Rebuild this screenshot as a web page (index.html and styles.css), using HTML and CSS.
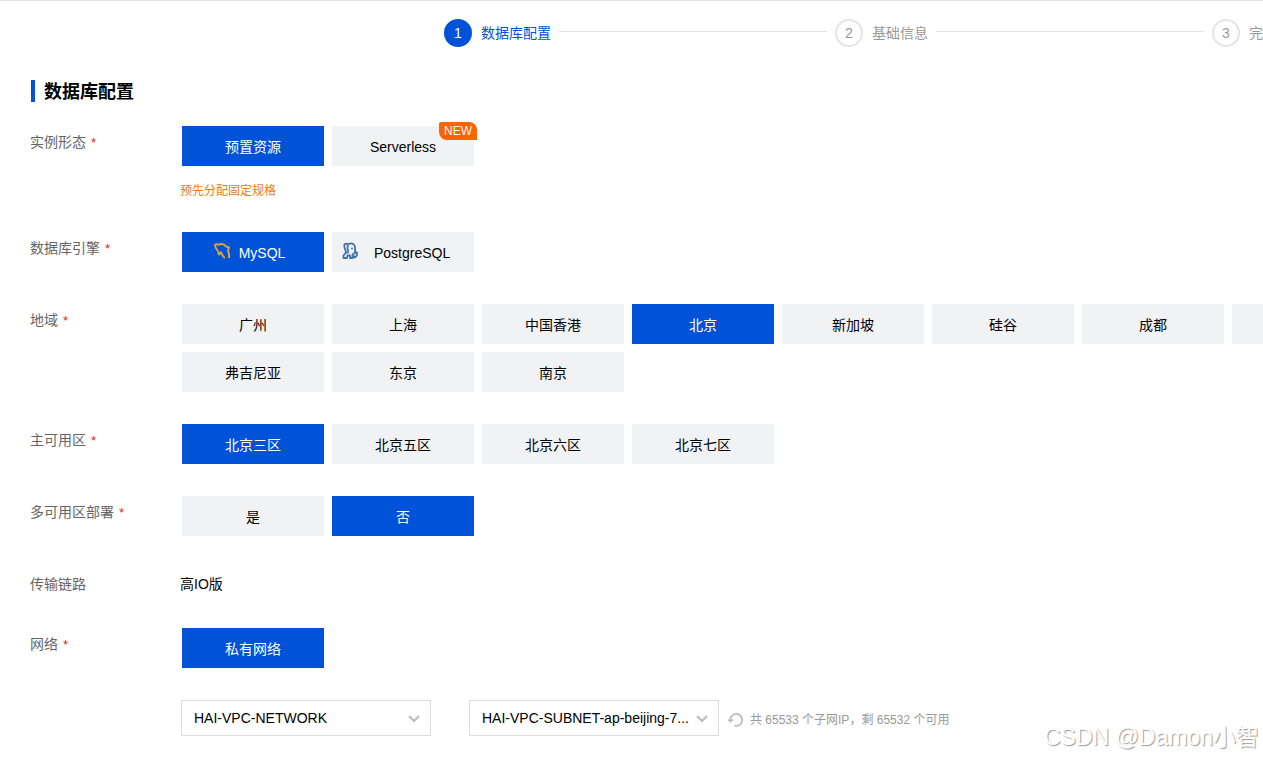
FILE: index.html
```html
<!DOCTYPE html>
<html lang="zh-CN">
<head>
<meta charset="utf-8">
<meta name="viewport" content="width=device-width, initial-scale=1">
<title>数据库配置</title>
<link rel="stylesheet" href="styles.css">
</head>
<body>
<div class="page">
  <ol class="steps">
    <li class="step step-active"><span class="step-num">1</span><span class="step-name">数据库配置</span></li>
    <li class="step-line" role="presentation"></li>
    <li class="step"><span class="step-num">2</span><span class="step-name">基础信息</span></li>
    <li class="step-line" role="presentation"></li>
    <li class="step"><span class="step-num">3</span><span class="step-name">完</span></li>
  </ol>

  <main class="config">
    <h1 class="title">数据库配置</h1>

    <section class="row" role="group" aria-labelledby="l-form">
      <div class="label" id="l-form">实例形态<span class="req">*</span></div>
      <div class="field">
        <div class="options">
          <button type="button" class="option selected" aria-pressed="true">预置资源</button>
          <button type="button" class="option" aria-pressed="false">Serverless<span class="badge">NEW</span></button>
        </div>
        <p class="tip">预先分配固定规格</p>
      </div>
    </section>

    <section class="row" role="group" aria-labelledby="l-engine">
      <div class="label" id="l-engine">数据库引擎<span class="req">*</span></div>
      <div class="options">
        <button type="button" class="option engine selected" aria-pressed="true">
          <svg class="icon" viewBox="0 0 18 18" aria-hidden="true"><path d="M5 9C3.500 7.500 2 5.500 2 3C3 1.700 4.500 2.600 6 2.500C9 1.500 11.500 2.300 13 4.500L16 5.500L15 8.500C16 11 16.300 13 16 16M5 9L6 12.500L8 10.200C9 12.500 9.500 14.500 12 16" fill="none" stroke="#dba53c" stroke-width="2" stroke-linejoin="round"/></svg>
          <span>MySQL</span>
        </button>
        <button type="button" class="option engine engine-wide" aria-pressed="false">
          <svg class="icon" viewBox="0 0 18 18" aria-hidden="true"><path d="M5 10.500C4.500 7.500 2.500 4.300 3.500 2.300C5.500 1.200 7.300 2 8.500 1.800C11 .8 13.700 2.200 14 5C14.300 7.300 14.200 9 13.800 11M7 3C6.300 5.500 6.500 8 7.500 9.500M5 10.500L2.500 13.500V16H6L6.500 13.500H9V16H11.500V12.500L13.800 11L16 10.300C16.400 13 15.200 15.500 13.300 15.600V13.500M5 10.500C6.200 11 7.200 10.500 7.500 9.500" fill="none" stroke="#4071a8" stroke-width="1.800" stroke-linejoin="round"/><circle cx="11" cy="6.500" r="1" fill="#4071a8"/></svg>
          <span>PostgreSQL</span>
        </button>
      </div>
    </section>

    <section class="row" role="group" aria-labelledby="l-region">
      <div class="label" id="l-region">地域<span class="req">*</span></div>
      <div class="options regions">
        <button type="button" class="option">广州</button>
        <button type="button" class="option">上海</button>
        <button type="button" class="option">中国香港</button>
        <button type="button" class="option selected" aria-pressed="true">北京</button>
        <button type="button" class="option">新加坡</button>
        <button type="button" class="option">硅谷</button>
        <button type="button" class="option">成都</button>
        <button type="button" class="option" aria-label="更多地域"></button>
        <button type="button" class="option">弗吉尼亚</button>
        <button type="button" class="option">东京</button>
        <button type="button" class="option">南京</button>
      </div>
    </section>

    <section class="row" role="group" aria-labelledby="l-zone">
      <div class="label" id="l-zone">主可用区<span class="req">*</span></div>
      <div class="options">
        <button type="button" class="option selected" aria-pressed="true">北京三区</button>
        <button type="button" class="option">北京五区</button>
        <button type="button" class="option">北京六区</button>
        <button type="button" class="option">北京七区</button>
      </div>
    </section>

    <section class="row" role="group" aria-labelledby="l-multi">
      <div class="label" id="l-multi">多可用区部署<span class="req">*</span></div>
      <div class="options">
        <button type="button" class="option">是</button>
        <button type="button" class="option selected" aria-pressed="true">否</button>
      </div>
    </section>

    <section class="row row-text">
      <div class="label">传输链路</div>
      <div class="value">高IO版</div>
    </section>

    <section class="row" role="group" aria-labelledby="l-net">
      <div class="label" id="l-net">网络<span class="req">*</span></div>
      <div class="field">
        <div class="options">
          <button type="button" class="option selected" aria-pressed="true">私有网络</button>
        </div>
        <div class="network">
          <div class="select-box">
            <select class="select" aria-label="私有网络"><option>HAI-VPC-NETWORK</option></select>
            <svg class="chevron" viewBox="0 0 12 8" aria-hidden="true"><path d="M1 1L6 6L11 1" fill="none" stroke="#bbb" stroke-width="2"/></svg>
          </div>
          <div class="select-box">
            <select class="select" aria-label="子网"><option>HAI-VPC-SUBNET-ap-beijing-7...</option></select>
            <svg class="chevron" viewBox="0 0 12 8" aria-hidden="true"><path d="M1 1L6 6L11 1" fill="none" stroke="#bbb" stroke-width="2"/></svg>
          </div>
          <div class="subnet">
            <button type="button" class="refresh" aria-label="刷新"><svg viewBox="0 0 16 16" aria-hidden="true"><path d="M2.300 9A6 6 0 1 1 6.500 13.700" fill="none" stroke="#b9bdc2" stroke-width="1.800"/><path d="M0 7.500L2.400 9.500L5 7.500" fill="none" stroke="#b9bdc2" stroke-width="1.600"/></svg></button>
            <span>共 65533 个子网IP，剩 65532 个可用</span>
          </div>
        </div>
      </div>
    </section>
  </main>
  <div class="watermark">CSDN @Damon小智</div>
</div>
</body>
</html>
```
FILE: styles.css
```css
* {
  box-sizing: border-box;
}

body {
  margin: 0;
  background: #fff;
  color: #000;
  font: 14px/20px "Liberation Sans", "Noto Sans CJK SC", sans-serif;
}

button,
select {
  font: inherit;
}

.page {
  position: relative;
  min-height: 100vh;
  overflow: hidden;
  border-top: 1px solid #e5e5e5;
}

.steps {
  display: flex;
  align-items: center;
  gap: 8px;
  margin: 0;
  padding: 18px 0 0 444px;
  list-style: none;
}

.step {
  display: flex;
  flex: none;
  align-items: center;
  gap: 9px;
  color: #999;
}

.step-num {
  display: grid;
  place-items: center;
  width: 28px;
  height: 28px;
  border: 2px solid #e5e5e5;
  border-radius: 50%;
}

.step-active {
  color: #0052d9;
}

.step-active .step-num {
  border-color: #0052d9;
  background: #0052d9;
  color: #fff;
}

.step-line {
  flex: 1;
  height: 1px;
  margin-bottom: 3px;
  background: #e3e3e3;
}

.config {
  padding: 33px 0 22px 30px;
}

.title {
  margin: 0 0 24px 1px;
  padding: 2px 0 0 9px;
  border-left: 4px solid #0052d9;
  font-size: 18px;
  line-height: 20px;
}

.row {
  display: flex;
  margin-bottom: 32px;
}

.row:last-child {
  margin-bottom: 0;
}

.label {
  flex: none;
  width: 150px;
  padding-top: 6px;
  color: #666;
}

.req {
  margin-left: 5px;
  color: #e62222;
  font-size: 13px;
}

.field {
  flex: 1;
}

.options {
  display: flex;
  flex-wrap: wrap;
  gap: 8px;
  padding-left: 2px;
}

.regions {
  display: grid;
  grid-template-columns: repeat(8, 142px);
}

.option {
  position: relative;
  display: flex;
  align-items: center;
  justify-content: center;
  width: 142px;
  height: 40px;
  padding: 2px 0 0;
  border: 0;
  background: #f1f2f4;
  color: #000;
}

.selected {
  background: #0052d9;
  color: #fff;
}

.engine {
  gap: 8px;
  padding-right: 8px;
}

.engine-wide {
  justify-content: flex-start;
  gap: 15px;
  padding-left: 9px;
}

.icon {
  width: 18px;
  height: 18px;
  margin-bottom: 4px;
}

.badge {
  position: absolute;
  top: -4px;
  right: -3px;
  width: 38px;
  border-radius: 2px 8px 0 8px;
  background: #ff6200;
  color: #fff;
  font-size: 12px;
  line-height: 18px;
}

.tip {
  margin: 16px 0 0;
  color: #ed7b0c;
  font-size: 12px;
  line-height: 18px;
}

.row-text {
  margin-top: 38px;
  margin-bottom: 34px;
}

.row-text .label {
  padding: 0;
}

.network {
  display: flex;
  align-items: center;
  margin-top: 32px;
  padding-left: 1px;
}

.select-box {
  position: relative;
  width: 250px;
}

.select-box + .select-box {
  margin-left: 38px;
}

.select {
  display: block;
  appearance: none;
  width: 100%;
  height: 36px;
  padding: 0 24px 0 12px;
  border: 1px solid #ddd;
  border-radius: 0;
  background: #fff;
  color: #000;
}

.chevron {
  position: absolute;
  top: 15px;
  right: 11px;
  width: 12px;
  height: 8px;
  pointer-events: none;
}

.subnet {
  display: flex;
  align-items: center;
  gap: 6px;
  margin-left: 9px;
  padding-top: 3px;
  color: #999;
  font-size: 12px;
  white-space: nowrap;
}

.refresh {
  display: flex;
  padding: 0;
  border: 0;
  background: none;
}

.refresh svg {
  width: 16px;
  height: 16px;
}

.watermark {
  position: absolute;
  right: 4px;
  bottom: 5px;
  color: #fff;
  font-size: 23px;
  line-height: 32px;
  text-shadow: 1px 1px 1px #999;
}
```
